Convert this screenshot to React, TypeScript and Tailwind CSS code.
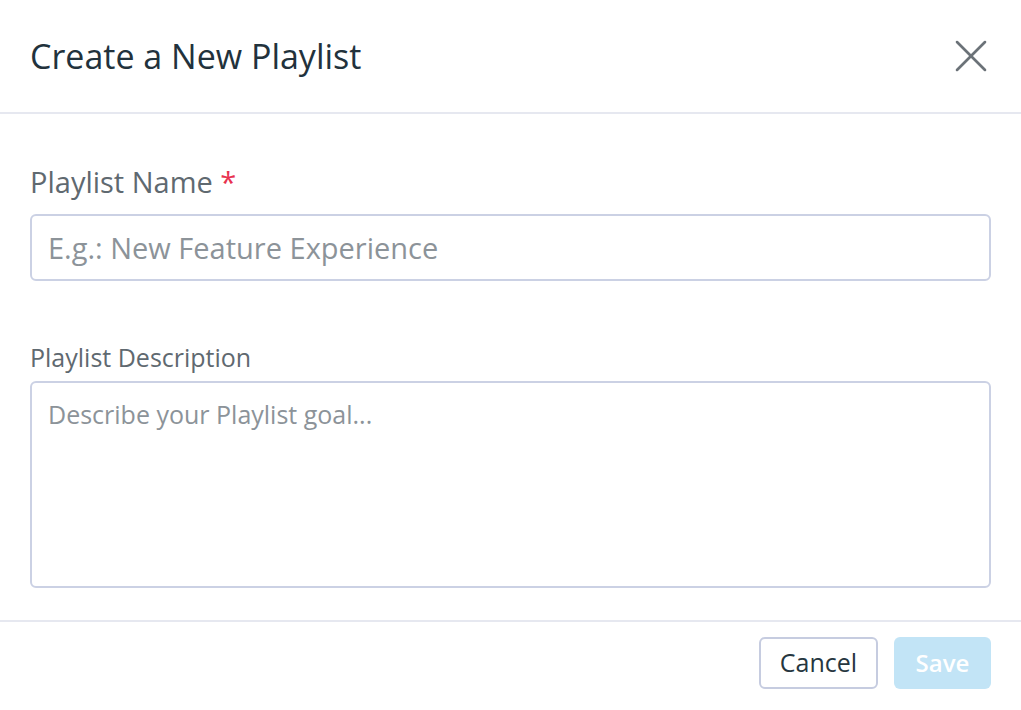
import { X } from "lucide-react";

export default function App() {
  return (
    <div className="flex h-[710px] w-[1021px] flex-col bg-white font-['Open_Sans',sans-serif]">
      <div className="flex h-[114px] items-center justify-between border-b-2 border-[#e6e8f0] pl-[30px] pr-[22px]">
        <h1 className="text-[34px] font-normal text-[#22323c]">Create a New Playlist</h1>
        <button type="button" aria-label="close" className="text-[#6b7278]">
          <X className="h-[56px] w-[56px]" strokeWidth={1.1} />
        </button>
      </div>

      <div className="flex flex-1 flex-col px-[30px] pt-[50px]">
        <label className="mb-[14px] text-[29px] leading-[36px] text-[#5f6970]">
          Playlist Name <span className="text-[#e8324f]">*</span>
        </label>
        <input
          className="h-[67px] w-full rounded-[6px] border-2 border-[#cbd1e4] px-[16px] text-[29px] text-[#263640] outline-none placeholder:text-[#8c9399]"
          placeholder="E.g.: New Feature Experience"
        />
        <label className="mt-[60px] mb-[8px] text-[25px] leading-[32px] text-[#5f6970]">
          Playlist Description
        </label>
        <textarea
          className="h-[207px] w-full resize-none rounded-[6px] border-2 border-[#cbd1e4] px-[16px] py-[14px] text-[25px] leading-[34px] text-[#263640] outline-none placeholder:text-[#8c9399]"
          placeholder="Describe your Playlist goal..."
        />
      </div>

      <div className="flex h-[90px] items-start justify-end gap-[16px] border-t-2 border-[#e6e8f0] pr-[30px] pt-[15px]">
        <button
          type="button"
          className="h-[52px] w-[119px] rounded-[6px] border-2 border-[#c6cce0] text-[25px] text-[#263640]"
        >
          Cancel
        </button>
        <button
          type="button"
          disabled
          className="h-[52px] w-[97px] rounded-[6px] bg-[#c2e4f6] text-[24px] font-semibold text-white"
        >
          Save
        </button>
      </div>
    </div>
  );
}
